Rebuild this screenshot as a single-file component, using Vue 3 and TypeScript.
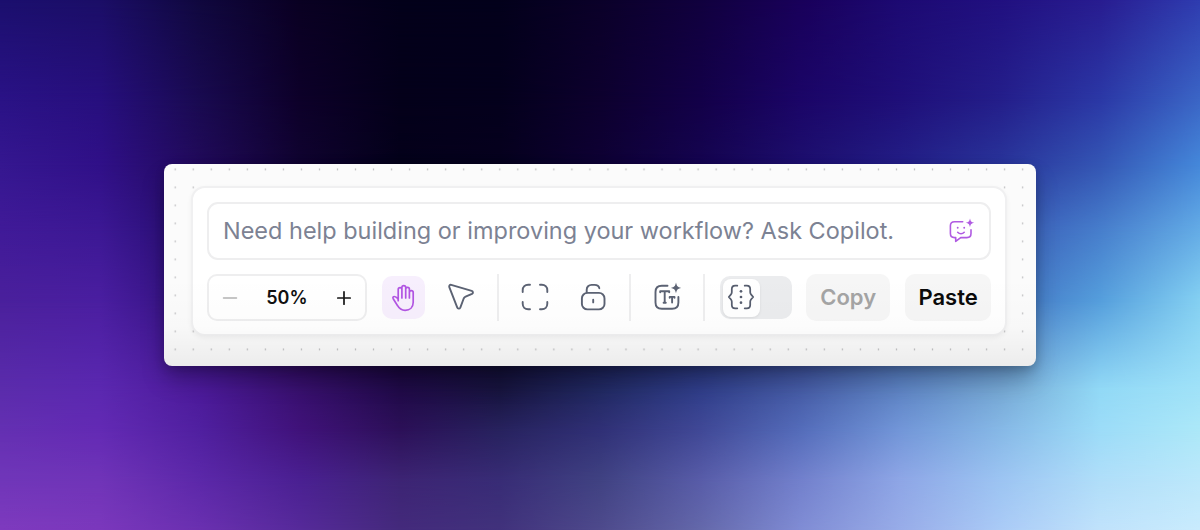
<script setup lang="ts">
import { ref } from 'vue'

interface Band {
  y: number
  colors: string[]
}

const stops = [0, 100, 200, 300, 400, 500, 600, 700, 800, 900, 1000, 1100, 1200]

/* Horizontal colour bands; each one fades in from the band above it. */
const bands: Band[] = [
  { y: 0, colors: ['#1b0f6e', '#1b0e67', '#10083e', '#0a0022', '#03001a', '#03001b', '#0b0029', '#11003e', '#19005a', '#1d0a73', '#211080', '#281c90', '#2f3cb0'] },
  { y: 100, colors: ['#2a1286', '#270f7e', '#190a50', '#0d0029', '#04001a', '#04001c', '#0d002e', '#130048', '#1b0567', '#1f0f79', '#241e8a', '#2b38a6', '#3b66c6'] },
  { y: 165, colors: ['#351790', '#301088', '#210a5a', '#100330', '#04001a', '#06001e', '#0e0034', '#150450', '#1d0f6e', '#231e86', '#29349a', '#3456b4', '#4588da'] },
  { y: 230, colors: ['#401a98', '#3c1894', '#240c6c', '#120232', '#04001c', '#07001f', '#0e0436', '#161458', '#203078', '#2c48a0', '#3858b4', '#477ecc', '#64ace6'] },
  { y: 300, colors: ['#4a209c', '#4a1ea0', '#30107c', '#1c0444', '#08001e', '#08021f', '#0e0c38', '#182258', '#28388a', '#3860b0', '#4070c0', '#559edc', '#84d0f2'] },
  { y: 390, colors: ['#5b2cac', '#5b28b0', '#4c1a9a', '#38106e', '#200a48', '#17143e', '#212962', '#303e8a', '#465ca6', '#5e84c4', '#76a8d4', '#92d9f6', '#a0e2f8'] },
  { y: 430, colors: ['#6430b2', '#632ab4', '#5020a0', '#40127a', '#2c1058', '#27225e', '#303076', '#404896', '#546cba', '#7296d8', '#86b8e6', '#9cdcf8', '#ace8f8'] },
  { y: 480, colors: ['#7036b9', '#7034b8', '#5c28a9', '#4a2092', '#3d2474', '#382c76', '#404282', '#585ca8', '#7280cc', '#8ea6e6', '#9cc4f2', '#b0def9', '#bce8fb'] },
  { y: 530, colors: ['#7e3abe', '#7b38bc', '#6a30b0', '#562a9a', '#442a7c', '#41327c', '#4e4a8c', '#6468aa', '#808cd4', '#98ace8', '#aacaf6', '#c0e2fb', '#c9ebfd'] },
]

function bandStyle(i: number) {
  const band = bands[i]
  const list = band.colors.map((c, n) => `${c} ${(stops[n] / 12).toFixed(3)}%`).join(', ')
  const image = `linear-gradient(90deg, ${list})`
  if (i === 0) return { backgroundImage: image }
  const mask = `linear-gradient(180deg, transparent ${bands[i - 1].y / 5.3}%, #000 ${band.y / 5.3}%)`
  return { backgroundImage: image, maskImage: mask }
}

const zoom = ref(50)
const tool = ref<'hand' | 'pointer'>('hand')
</script>

<template>
  <main class="stage">
    <div v-for="(b, i) in bands" :key="b.y" class="band" :style="bandStyle(i)"></div>

    <section class="card">
      <div class="panel">
        <div class="ask">
          <span class="ask-text">Need help building or improving your workflow? Ask Copilot.</span>
          <svg class="copilot" width="28" height="28" viewBox="0 0 28 28">
            <path d="M15.700 4.700H7.500C5 4.700 3.400 6.300 3.400 8.800v7.700c0 2.500 1.600 4.100 4.100 4.100h1.200v3.800l5-3.800h6.200c2.500 0 4.100-1.600 4.100-4.100v-3.700" />
            <path d="M10.700 15.300c1.800 1.900 4.700 1.900 6.500 0" />
            <path class="solid" d="M23 1.400c.8 3.200 1.200 3.600 4.300 4.400-3.100.8-3.500 1.200-4.300 4.400-.8-3.200-1.200-3.600-4.300-4.400 3.100-.8 3.500-1.200 4.300-4.400z" />
            <circle class="solid" cx="10.700" cy="10.700" r=".95" />
            <circle class="solid" cx="17.200" cy="10.700" r=".95" />
          </svg>
        </div>

        <div class="tools">
          <div class="zoom">
            <svg class="minus" width="14" height="14" viewBox="0 0 14 14"><path d="M.5 7h13" /></svg>
            <span class="zoom-value">{{ zoom }}%</span>
            <svg class="plus" width="14" height="14" viewBox="0 0 14 14"><path d="M.8 7h12.400M7 .8v12.400" /></svg>
          </div>

          <button class="tool hand" :class="{ active: tool === 'hand' }" @click="tool = 'hand'">
            <svg width="28" height="28" viewBox="0 0 28 28">
              <path d="M9.200 16.700V5.400a1.850 1.850 0 0 1 3.700 0V14M12.900 5.400V3.600a1.900 1.900 0 0 1 3.800 0V14M16.700 5.200a1.850 1.850 0 0 1 3.700 0V14M20.400 8.600a1.900 1.900 0 0 1 3.800 0v9.600c0 5-3.400 8.100-8.100 8.100-3.700 0-5.900-1.600-7.500-4.600l-4.400-7c-.8-1.400.2-2.300 1.300-2.200 1.600.1 2.700 1.100 3.700 2.800" />
            </svg>
          </button>
          <button class="tool pointer" @click="tool = 'pointer'">
            <svg width="28" height="28" viewBox="0 0 28 28">
              <path d="M4.200 1.900l20.500 5.900c1.500.5 1.700 2.300.3 3l-6.400 2.800c-.9.4-1.500 1-1.900 1.900L13.300 24.600c-.7 1.400-2.600 1.300-3.100-.2L2.300 4.100c-.5-1.300.6-2.600 1.900-2.200z" />
            </svg>
          </button>
          <i class="rule"></i>
          <button class="tool fit">
            <svg width="28" height="28" viewBox="0 0 28 28">
              <path d="M1.700 9V7.200C1.700 4 4 1.700 7.200 1.700H9M19 1.700h1.800c3.200 0 5.500 2.300 5.500 5.500V9M26.300 19v1.800c0 3.200-2.300 5.500-5.500 5.500H19M9 26.300H7.200C4 26.300 1.700 24 1.700 20.800V19" />
            </svg>
          </button>
          <button class="tool lock">
            <svg width="28" height="28" viewBox="0 0 28 28">
              <rect x="2.900" y="9.900" width="22.600" height="16.500" rx="5.500" />
              <path d="M7.700 9.600V6.800c0-2.900 2-4.900 4.900-4.900h3c2.700 0 4.300 1.100 4.700 3.300M14.200 16.800v2.600" />
            </svg>
          </button>
          <i class="rule second"></i>
          <button class="tool text">
            <svg width="28" height="28" viewBox="0 0 28 28">
              <path d="M14.500 2.800H8.800C4.800 2.800 2.500 5.100 2.500 9v10.500c0 4 2.300 6.300 6.300 6.300h10.300c4 0 6.300-2.300 6.300-6.300V14" />
              <path d="M7.200 9.200V8.200h9v1M11.700 8.200v11.600M10.600 19.800h2.200M16.700 14.700v-.8h4.800v.8M19.100 13.900v5.700" />
              <path class="solid" d="M23 -.4c.9 3.900 1.500 4.500 5.100 5.300-3.600.9-4.200 1.500-5.100 5.300-.9-3.800-1.500-4.400-5.100-5.300 3.600-.8 4.200-1.400 5.100-5.300z" />
            </svg>
          </button>
          <i class="rule third"></i>

          <div class="switch">
            <div class="knob">
              <svg width="28" height="28" viewBox="0 0 28 28">
                <path d="M10.300 2.700H8.200C6 2.700 4.800 3.900 4.800 6.100v3.200c0 1-.3 1.600-1 2.400l-2 2.300 2 2.300c.7.8 1 1.400 1 2.400v3.200c0 2.200 1.200 3.400 3.400 3.400h2.100M17.700 2.700h2.100c2.200 0 3.400 1.200 3.400 3.400v3.200c0 1 .3 1.600 1 2.400l2 2.300-2 2.300c-.7.8-1 1.400-1 2.400v3.200c0 2.200-1.200 3.400-3.400 3.400h-2.100" />
                <circle class="solid" cx="14" cy="8.300" r="1.350" />
                <circle class="solid" cx="14" cy="14" r="1.350" />
                <circle class="solid" cx="14" cy="19.700" r="1.350" />
              </svg>
            </div>
          </div>

          <button class="action copy">Copy</button>
          <button class="action paste">Paste</button>
        </div>
      </div>
    </section>
  </main>
</template>

<style>
body {
  margin: 0;
}
</style>

<style scoped>
.stage {
  position: relative;
  display: flex;
  align-items: center;
  justify-content: center;
  height: 530px;
  overflow: hidden;
  font-family: Inter, "Liberation Sans", sans-serif;
}

.band {
  position: absolute;
  inset: 0;
}

.card {
  position: relative;
  box-sizing: border-box;
  width: 872px;
  height: 202px;
  padding: 22px 29px 30px 27px;
  border-radius: 8px;
  background-color: #fbfbfb;
  background-image: radial-gradient(circle, #c2c2c4 0.65px, transparent 1.15px);
  background-size: 18.04px 18px;
  background-position: 2.2px -3.6px;
  box-shadow: 0 14px 24px -2px rgba(0, 0, 0, 0.28), 0 3px 10px rgba(0, 0, 0, 0.16);
}

.card::after {
  content: "";
  position: absolute;
  inset: 0;
  border-radius: 8px;
  background: linear-gradient(180deg, transparent 55%, rgba(0, 0, 0, 0.01) 80%, rgba(0, 0, 0, 0.06) 100%);
  pointer-events: none;
}

.panel {
  box-sizing: border-box;
  height: 150px;
  padding: 14px;
  border: 2px solid #f0f0f1;
  border-radius: 14px;
  background: #fff;
  box-shadow: 0 2px 5px rgba(0, 0, 0, 0.05);
}

.ask {
  display: flex;
  align-items: center;
  justify-content: space-between;
  box-sizing: border-box;
  height: 58px;
  padding: 0 14px;
  border: 2px solid #eeeeef;
  border-radius: 11px;
}

.ask-text {
  color: #7c8293;
  font-size: 23.48px;
  line-height: 30px;
  white-space: nowrap;
}

svg {
  display: block;
  flex: none;
  overflow: visible;
  fill: none;
  stroke: currentColor;
  stroke-width: 1.9;
  stroke-linecap: round;
  stroke-linejoin: round;
}

.solid {
  fill: currentColor;
  stroke: none;
}

.copilot {
  color: #b05be2;
  stroke-width: 1.6;
}

.tools {
  display: flex;
  align-items: center;
  height: 47px;
  margin-top: 14px;
}

.zoom {
  display: flex;
  align-items: center;
  justify-content: space-between;
  box-sizing: border-box;
  width: 160px;
  height: 47px;
  margin-right: 15px;
  padding: 0 14px;
  border: 2px solid #eeeeef;
  border-radius: 10px;
}

.zoom-value {
  color: #101010;
  font-size: 18px;
  font-weight: 600;
}

.minus {
  color: #b4b4b4;
  stroke-width: 1.5;
}

.plus {
  color: #161616;
  stroke-width: 1.7;
}

button {
  margin: 0;
  padding: 0;
  border: 0;
  background: none;
  font: inherit;
}

.tool {
  display: flex;
  align-items: center;
  justify-content: center;
  width: 43px;
  height: 43px;
  border-radius: 10px;
  color: #5b6273;
}

.tool svg {
  margin-bottom: 1px;
}

.tool.active {
  background: #f7effd;
  color: #b255e3;
}

.hand svg {
  margin-bottom: 0;
  stroke-width: 1.7;
}

.pointer {
  margin-left: 15px;
}

.rule {
  width: 2px;
  height: 47px;
  margin-left: 14px;
  background: #eeeeef;
}

.fit {
  margin-left: 15px;
}

.lock {
  margin-left: 15px;
}

.rule.second {
  margin-left: 15px;
}

.text {
  margin-left: 14px;
}

.rule.third {
  margin-left: 15px;
}

.switch {
  display: flex;
  align-items: center;
  box-sizing: border-box;
  width: 72px;
  height: 43px;
  margin-left: 15px;
  padding: 0 2.500px;
  border-radius: 10px;
  background: #ebecee;
}

.knob {
  display: flex;
  align-items: center;
  justify-content: center;
  width: 37.500px;
  height: 38px;
  border-radius: 8px;
  background: #fff;
  color: #565d6e;
  box-shadow: 0 1px 3px rgba(0, 0, 0, 0.08);
}

.knob svg {
  margin: 0 1.500px 1px 0;
  stroke-width: 1.75;
}

.action {
  height: 47px;
  padding-bottom: 2px;
  border-radius: 10px;
  background: #f6f6f6;
  font-size: 22px;
  font-weight: 600;
}

.copy {
  width: 84px;
  margin-left: 14px;
  color: #a4a4a4;
}

.paste {
  width: 86px;
  margin-left: 15px;
  color: #0a0a0a;
}
</style>
